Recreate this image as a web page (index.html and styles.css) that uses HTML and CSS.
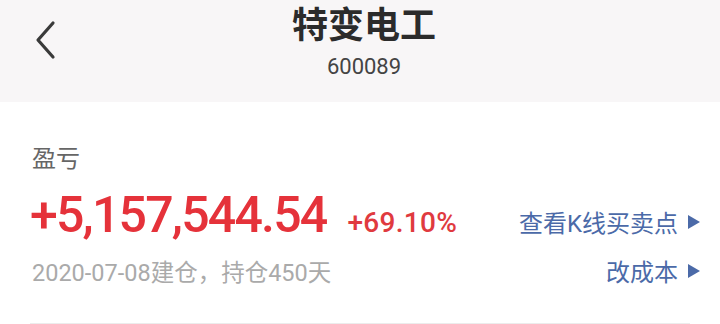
FILE: index.html
```html
<!DOCTYPE html>
<html lang="zh">
<head>
<meta charset="utf-8">
<link rel="stylesheet" href="styles.css">
</head>
<body>
<header class="top">
  <div class="back">
    <svg width="24" height="40" viewBox="0 0 24 40"><path d="M19 3 L4 20 L19 37" fill="none" stroke="#3a3a3a" stroke-width="3.2" stroke-linecap="round" stroke-linejoin="round"/></svg>
  </div>
  <div class="titles">
    <div class="name">特变电工</div>
    <div class="code">600089</div>
  </div>
</header>
<main class="card">
  <div class="label">盈亏</div>
  <div class="row main-row">
    <div class="amounts">
      <span class="big">+5,157,544.54</span>
      <span class="pct">+69.10%</span>
    </div>
    <a class="link">查看K线买卖点<span class="tri"></span></a>
  </div>
  <div class="row sub-row">
    <span class="since">2020-07-08建仓，持仓450天</span>
    <a class="link">改成本<span class="tri"></span></a>
  </div>
  <div class="divider"></div>
</main>
</body>
</html>
```
FILE: styles.css
```css
* { box-sizing: border-box; }
html, body { margin: 0; padding: 0; background: #fff; }
body {
  width: 720px;
  height: 324px;
  overflow: hidden;
  font-family: Roboto, "Noto Sans CJK SC", sans-serif;
}
.top {
  height: 102px;
  background: #f8f6f7;
  display: flex;
  align-items: flex-start;
  padding: 0 0 0 34px;
}
.back {
  margin-top: 20px;
  width: 24px;
  height: 40px;
}
.titles {
  flex: 1;
  display: flex;
  flex-direction: column;
  align-items: center;
  padding-right: 50px;
  padding-top: 4px;
}
.name {
  font-size: 36px;
  line-height: 44px;
  font-weight: 700;
  color: #2b2b2b;
}
.code {
  font-size: 22px;
  line-height: 26px;
  color: #444;
  margin-top: 6px;
}
.card {
  padding: 0 20px 0 30px;
}
.label {
  margin-top: 42px;
  font-size: 24px;
  line-height: 30px;
  color: #666;
  padding-left: 2px;
}
.row {
  display: flex;
  justify-content: space-between;
  align-items: baseline;
}
.main-row { margin-top: 13px; }
.amounts { display: flex; align-items: baseline; gap: 21px; }
.big {
  font-size: 50px;
  line-height: 56px;
  font-weight: 500;
  letter-spacing: -1.8px;
  color: #e5323a;
}
.pct {
  font-size: 28px;
  font-weight: 500;
  color: #e03a3f;
  letter-spacing: 0.3px;
}
.link {
  font-size: 24px;
  color: #4b6aa8;
  display: inline-flex;
  align-items: center;
}
.tri {
  display: inline-block;
  width: 0;
  height: 0;
  border-top: 7px solid transparent;
  border-bottom: 7px solid transparent;
  border-left: 12px solid #4b6aa8;
  margin-left: 10px;
}
.sub-row { margin-top: 10px; }
.since {
  font-size: 23.5px;
  color: #aaa;
  padding-left: 2px;
}
.divider {
  margin: 35px 0 0 0;
  height: 1px;
  background: #ececec;
  width: 660px;
}
```
